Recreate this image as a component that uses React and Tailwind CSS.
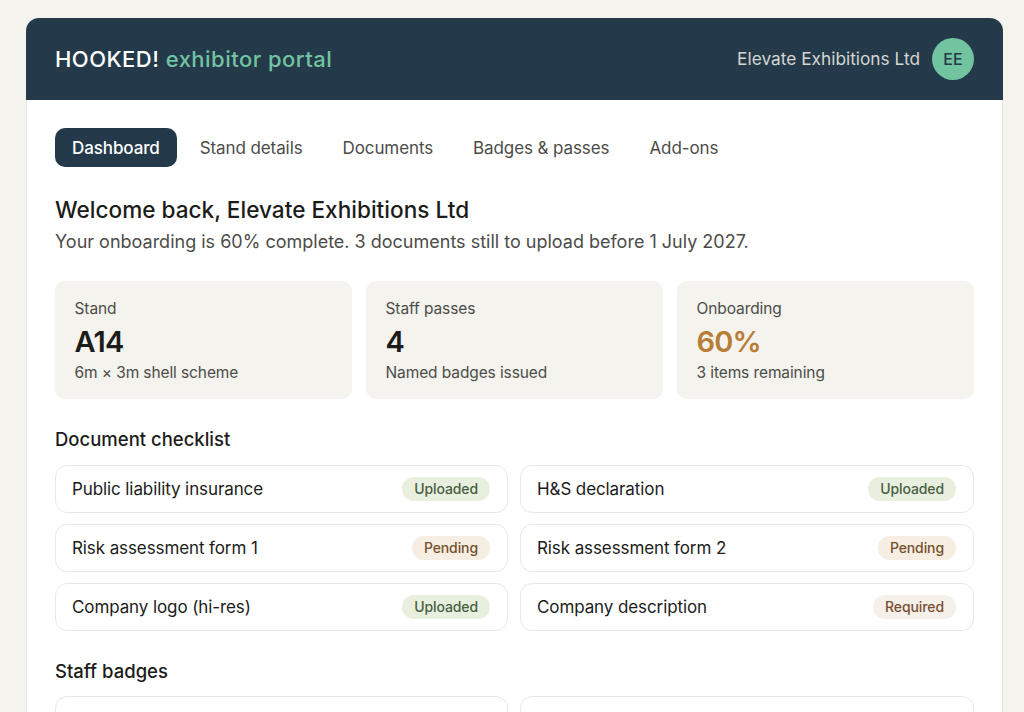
const tabs = ["Dashboard", "Stand details", "Documents", "Badges & passes", "Add-ons"];

const stats = [
  { label: "Stand", value: "A14", note: "6m × 3m shell scheme", color: "text-[#1c1c1a]" },
  { label: "Staff passes", value: "4", note: "Named badges issued", color: "text-[#1c1c1a]" },
  { label: "Onboarding", value: "60%", note: "3 items remaining", color: "text-[#b87d36]" },
];

const docs = [
  ["Public liability insurance", "Uploaded"],
  ["H&S declaration", "Uploaded"],
  ["Risk assessment form 1", "Pending"],
  ["Risk assessment form 2", "Pending"],
  ["Company logo (hi-res)", "Uploaded"],
  ["Company description", "Required"],
];

const pillStyles = {
  Uploaded: "bg-[#e9efdf] text-[#47603f]",
  Pending: "bg-[#f6eee2] text-[#75502c]",
  Required: "bg-[#f5f0ea] text-[#7a4f33]",
};

export default function App() {
  return (
    <div className="h-[712px] overflow-hidden bg-[#f4f3ee] px-[21px] pt-[18px] font-['Inter',sans-serif]">
      <div className="mx-[5px] w-[977px] rounded-t-[13px] border-x border-[#e6e5e0] bg-white">
        <header className="-mx-px flex h-[82px] items-center justify-between rounded-t-[13px] bg-[#243a4b] px-[29px]">
          <div className="text-[22px] leading-none font-medium tracking-[0.47px]">
            <span className="text-white">HOOKED!</span>{" "}
            <span className="text-[#72c3a0]">exhibitor portal</span>
          </div>
          <div className="flex items-center gap-3">
            <span className="text-[17.3px] text-[#d5d6d1]">Elevate Exhibitions Ltd</span>
            <div className="flex h-[42px] w-[42px] items-center justify-center rounded-full bg-[#72c3a0] text-[16px] font-medium text-[#243a4b]">
              EE
            </div>
          </div>
        </header>

        <main className="px-[28px] pt-[28px]">
          <nav className="flex gap-[6px]">
            {tabs.map((t, i) => (
              <div
                key={t}
                className={
                  "flex h-[39px] items-center rounded-[10px] px-[17px] pt-[2px] text-[17px] tracking-[-0.1px] " +
                  (i === 0 ? "bg-[#243a4b] font-medium text-white" : "text-[#4c4c49]")
                }
              >
                {t}
              </div>
            ))}
          </nav>

          <h1 className="mt-[29px] text-[22.6px] leading-[28px] font-medium text-[#1c1c1a]">
            Welcome back, Elevate Exhibitions Ltd
          </h1>
          <p className="mt-[5px] text-[18px] leading-[26px] text-[#4c4c49]">
            Your onboarding is 60% complete. 3 documents still to upload before 1 July 2027.
          </p>

          <section className="mt-[26px] grid grid-cols-3 gap-[14px]">
            {stats.map((s) => (
              <div key={s.label} className="h-[118px] rounded-[10px] bg-[#f4f3ee] px-[19.5px] pt-[18px]">
                <div className="text-[15.5px] leading-[20px] tracking-[-0.1px] text-[#4c4c49]">{s.label}</div>
                <div className={"mt-[5px] text-[29px] leading-[36px] font-semibold tracking-[-0.8px] " + s.color}>{s.value}</div>
                <div className="mt-[3px] text-[15.5px] leading-[20px] tracking-[-0.1px] text-[#4c4c49]">{s.note}</div>
              </div>
            ))}
          </section>

          <h2 className="mt-[28px] text-[18.5px] leading-[24px] font-medium text-[#1c1c1a]">
            Document checklist
          </h2>
          <section className="mt-[14px] grid grid-cols-[453px_1fr] gap-x-[12px] gap-y-[11px]">
            {docs.map(([name, status]) => (
              <div
                key={name}
                className="flex h-[48px] items-center justify-between rounded-[12px] border border-[#e9e8e4] pr-[17px] pl-[16px]"
              >
                <span className="pt-[2px] text-[17px] tracking-[-0.1px] text-[#1c1c1a]">{name}</span>
                <span
                  className={
                    "flex h-[24px] items-center rounded-full px-[12px] pb-[2px] text-[14px] font-medium tracking-[-0.1px] " +
                    pillStyles[status]
                  }
                >
                  {status}
                </span>
              </div>
            ))}
          </section>

          <h2 className="mt-[28px] text-[18.5px] leading-[24px] font-medium text-[#1c1c1a]">
            Staff badges
          </h2>
          <section className="mt-[13px] grid grid-cols-[453px_1fr] gap-x-[12px]">
            <div className="h-[48px] rounded-[12px] border border-[#e9e8e4]" />
            <div className="h-[48px] rounded-[12px] border border-[#e9e8e4]" />
          </section>
        </main>
      </div>
    </div>
  );
}
